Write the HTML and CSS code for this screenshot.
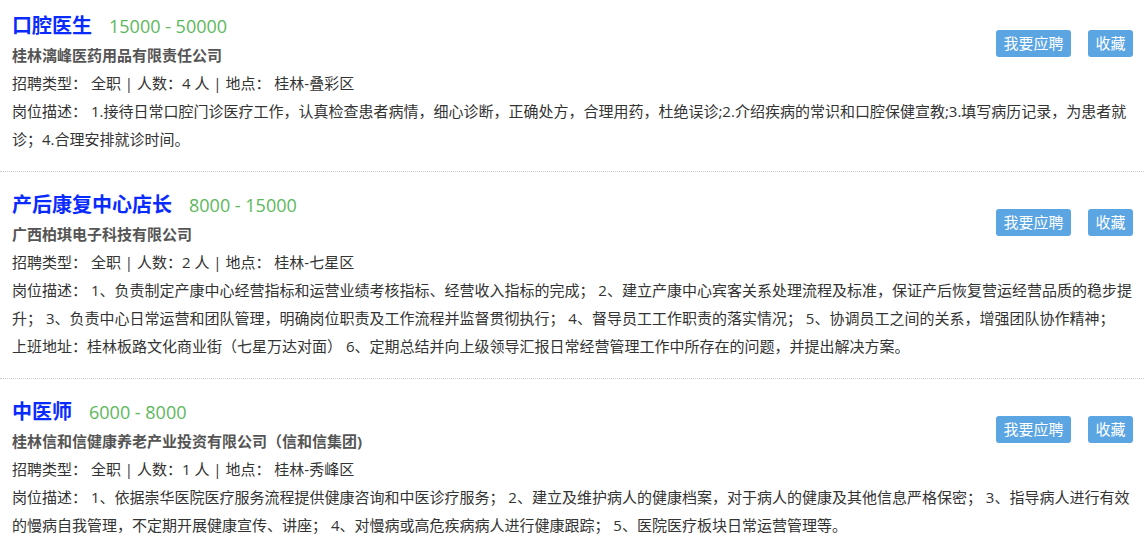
FILE: index.html
```html
<!DOCTYPE html>
<html lang="zh-CN">
<head>
<meta charset="UTF-8">
<meta name="viewport" content="width=device-width, initial-scale=1.0">
<title>招聘信息</title>
<link rel="stylesheet" href="styles.css">
</head>
<body>

<div class="job-list">
    <div class="job">
        <div class="job-head">
            <div class="job-main">
                <h3 class="job-title"><a href="#">口腔医生</a><span class="salary">15000 - 50000</span></h3>
                <div class="company">桂林漓峰医药用品有限责任公司</div>
                <div class="info">招聘类型： 全职 | 人数：4 人 | 地点： 桂林-叠彩区</div>
            </div>
            <div class="actions">
                <a href="#" class="btn">我要应聘</a>
                <a href="#" class="btn">收藏</a>
            </div>
        </div>
        <p class="desc">岗位描述： 1.接待日常口腔门诊医疗工作，认真检查患者病情，细心诊断，正确处方，合理用药，杜绝误诊;2.介绍疾病的常识和口腔保健宣教;3.填写病历记录，为患者就诊；4.合理安排就诊时间。</p>
    </div>

    <div class="job">
        <div class="job-head">
            <div class="job-main">
                <h3 class="job-title"><a href="#">产后康复中心店长</a><span class="salary">8000 - 15000</span></h3>
                <div class="company">广西柏琪电子科技有限公司</div>
                <div class="info">招聘类型： 全职 | 人数：2 人 | 地点： 桂林-七星区</div>
            </div>
            <div class="actions">
                <a href="#" class="btn">我要应聘</a>
                <a href="#" class="btn">收藏</a>
            </div>
        </div>
        <p class="desc">岗位描述： 1、负责制定产康中心经营指标和运营业绩考核指标、经营收入指标的完成； 2、建立产康中心宾客关系处理流程及标准，保证产后恢复营运经营品质的稳步提升； 3、负责中心日常运营和团队管理，明确岗位职责及工作流程并监督贯彻执行； 4、督导员工工作职责的落实情况； 5、协调员工之间的关系，增强团队协作精神； 上班地址：桂林板路文化商业街（七星万达对面） 6、定期总结并向上级领导汇报日常经营管理工作中所存在的问题，并提出解决方案。</p>
    </div>

    <div class="job">
        <div class="job-head">
            <div class="job-main">
                <h3 class="job-title"><a href="#">中医师</a><span class="salary">6000 - 8000</span></h3>
                <div class="company">桂林信和信健康养老产业投资有限公司（信和信集团)</div>
                <div class="info">招聘类型： 全职 | 人数：1 人 | 地点： 桂林-秀峰区</div>
            </div>
            <div class="actions">
                <a href="#" class="btn">我要应聘</a>
                <a href="#" class="btn">收藏</a>
            </div>
        </div>
        <p class="desc">岗位描述： 1、依据崇华医院医疗服务流程提供健康咨询和中医诊疗服务； 2、建立及维护病人的健康档案，对于病人的健康及其他信息严格保密； 3、指导病人进行有效的慢病自我管理，不定期开展健康宣传、讲座； 4、对慢病或高危疾病病人进行健康跟踪； 5、医院医疗板块日常运营管理等。</p>
    </div>
</div>

</body>
</html>
```

FILE: styles.css
```css
body {
    font-family: "Open Sans", "Noto Sans CJK SC", sans-serif;
    font-size: 15px;
    color: #333;
    background-color: #fff;
    margin: 0;
    padding: 0;
}
.job {
    padding: 18px 11px 18px 12px;
    border-bottom: 1px dotted #ccc;
}
.job:first-child {
    padding-top: 11px;
}
.job-head {
    display: flex;
    justify-content: space-between;
    align-items: flex-start;
}
.job-title {
    margin: 0;
    height: 30px;
    line-height: 30px;
    font-size: 20px;
    font-weight: bold;
}
.job-title a {
    color: #0a2bff;
    text-decoration: none;
}
.salary {
    margin-left: 17px;
    font-size: 18px;
    font-weight: normal;
    color: #5cb85c;
}
.company {
    line-height: 28px;
    font-weight: bold;
    color: #555;
}
.info {
    line-height: 28px;
}
.actions {
    display: flex;
    gap: 17px;
    margin-top: 19px;
}
.btn {
    display: block;
    height: 27px;
    line-height: 27px;
    padding: 0 7.5px;
    border-radius: 3px;
    background-color: #5ba5e2;
    color: #fff;
    text-decoration: none;
}
.desc {
    margin: 0;
    line-height: 28px;
}
```
